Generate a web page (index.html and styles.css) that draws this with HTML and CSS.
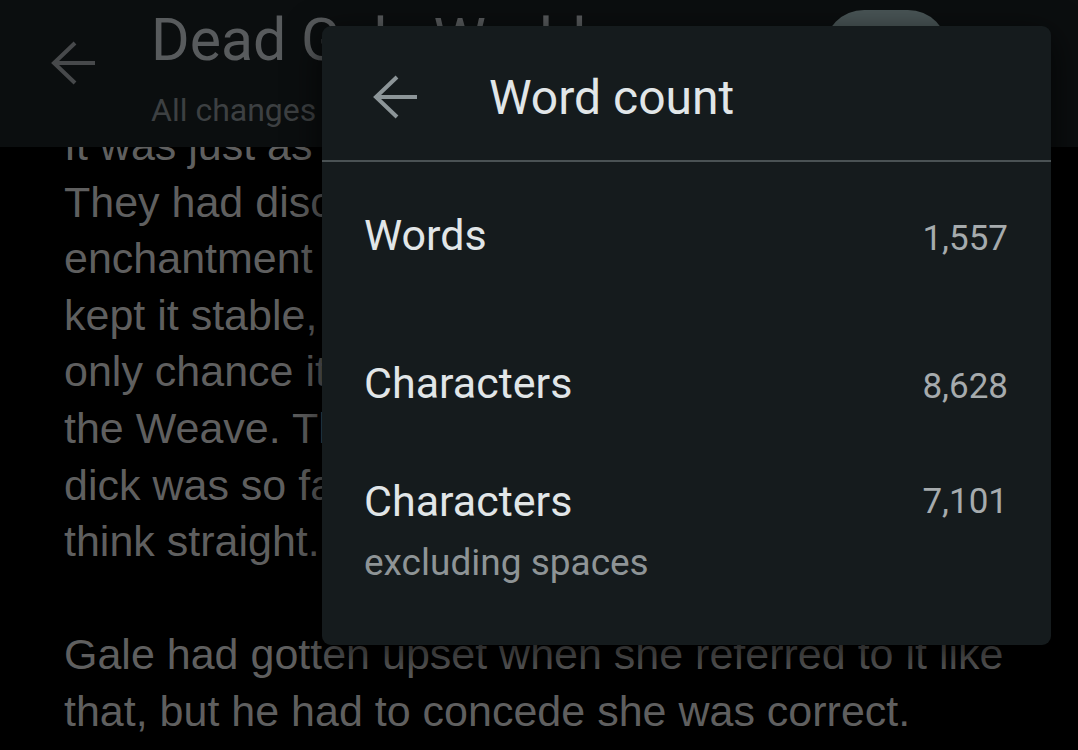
FILE: index.html
```html
<!DOCTYPE html>
<html lang="en">
<head>
    <meta charset="UTF-8">
    <title>Word count</title>
    <link rel="stylesheet" href="styles.css">
</head>
<body>

<div class="screen">
    <header class="appbar">
        <svg class="appbar-back" width="48" height="48" viewBox="0 0 48 48">
            <path d="M4 24H45M25 4L4 24L25 44" fill="none" stroke="currentColor" stroke-width="4"/>
        </svg>
        <div class="appbar-titles">
            <div class="doc-title">Dead Gale World</div>
            <div class="doc-status">All changes saved in Drive</div>
        </div>
        <div class="appbar-pill"></div>
    </header>

    <main class="doc">
        <p>It was just as bad as she had feared.<br>
            They had discovered that the<br>
            enchantment on the Gate was what<br>
            kept it stable, and that their<br>
            only chance it would close was to cut<br>
            the Weave. The problem was that her<br>
            dick was so far gone she couldn't<br>
            think straight.</p>
        <p>Gale had gotten upset when she referred to it like that, but he had to concede she was correct.</p>
    </main>

    <section class="dialog">
        <div class="dialog-head">
            <svg class="dialog-back" width="48" height="48" viewBox="0 0 48 48">
                <path d="M4 24H45M25 4L4 24L25 44" fill="none" stroke="currentColor" stroke-width="4"/>
            </svg>
            <h1 class="dialog-title">Word count</h1>
        </div>
        <div class="count-list">
            <div class="count-row">
                <div class="count-name">Words</div>
                <div class="count-value">1,557</div>
            </div>
            <div class="count-row second">
                <div class="count-name">Characters</div>
                <div class="count-value">8,628</div>
            </div>
            <div class="count-row third">
                <div class="count-label">
                    <div class="count-name">Characters</div>
                    <div class="count-sub">excluding spaces</div>
                </div>
                <div class="count-value">7,101</div>
            </div>
        </div>
    </section>
</div>

</body>
</html>
```

FILE: styles.css
```css
* {
    box-sizing: border-box;
}

body {
    margin: 0;
    background-color: #000;
    font-family: Roboto, "Liberation Sans", sans-serif;
}

.screen {
    position: relative;
    width: 1078px;
    height: 750px;
    overflow: hidden;
    background-color: #000;
}

/* app bar sits over the scrolled document */
.appbar {
    position: absolute;
    top: 0;
    left: 0;
    right: 0;
    height: 147px;
    display: flex;
    align-items: flex-start;
    background-color: #0b0e0f;
    z-index: 1;
}

.appbar-back {
    color: #47494b;
    margin: 39px 0 0 50px;
    flex-shrink: 0;
}

.appbar-titles {
    margin-left: 53px;
    padding-top: 5px;
    white-space: nowrap;
}

.doc-title {
    font-size: 59px;
    line-height: 70px;
    color: #585b5d;
}

.doc-status {
    margin-top: 15px;
    font-size: 32px;
    line-height: 40px;
    color: #3d4042;
}

.appbar-pill {
    margin: 10px 130px 0 auto;
    width: 124px;
    height: 80px;
    border-radius: 40px;
    background-color: #4a5657;
    flex-shrink: 0;
}

.doc {
    padding: 117px 64px 0;
    font-family: "Liberation Sans", Arial, sans-serif;
    font-size: 43px;
    line-height: 56.6px;
    color: #5f5f5f;
}

.doc p {
    margin: 0 0 56.6px;
}

/* word count dialog */
.dialog {
    position: absolute;
    left: 322px;
    top: 26px;
    width: 729px;
    height: 619px;
    border-radius: 9px;
    background-color: #151b1d;
    box-shadow: 0 10px 36px rgba(0, 0, 0, 0.75);
    z-index: 2;
}

.dialog-head {
    display: flex;
    align-items: center;
    height: 136px;
    padding: 8px 0 0 50px;
    border-bottom: 2px solid #4a5254;
}

.dialog-back {
    color: #8c9598;
    flex-shrink: 0;
}

.dialog-title {
    margin: 0 0 0 69px;
    font-size: 48px;
    font-weight: 400;
    color: #e1e6e8;
}

.count-list {
    padding: 45px 43px 0 42px;
}

.count-row {
    display: flex;
    justify-content: space-between;
    align-items: baseline;
}

.count-row.second {
    margin-top: 92px;
}

.count-row.third {
    margin-top: 62px;
    align-items: flex-start;
}

.count-name {
    font-size: 43px;
    line-height: 56px;
    color: #e1e6e8;
}

.count-sub {
    margin-top: 10px;
    font-size: 37px;
    line-height: 48px;
    color: #8e9496;
}

.count-value {
    font-size: 35px;
    color: #a6abad;
}

.count-row.third .count-value {
    line-height: 48px;
    margin-top: 5px;
}
```
